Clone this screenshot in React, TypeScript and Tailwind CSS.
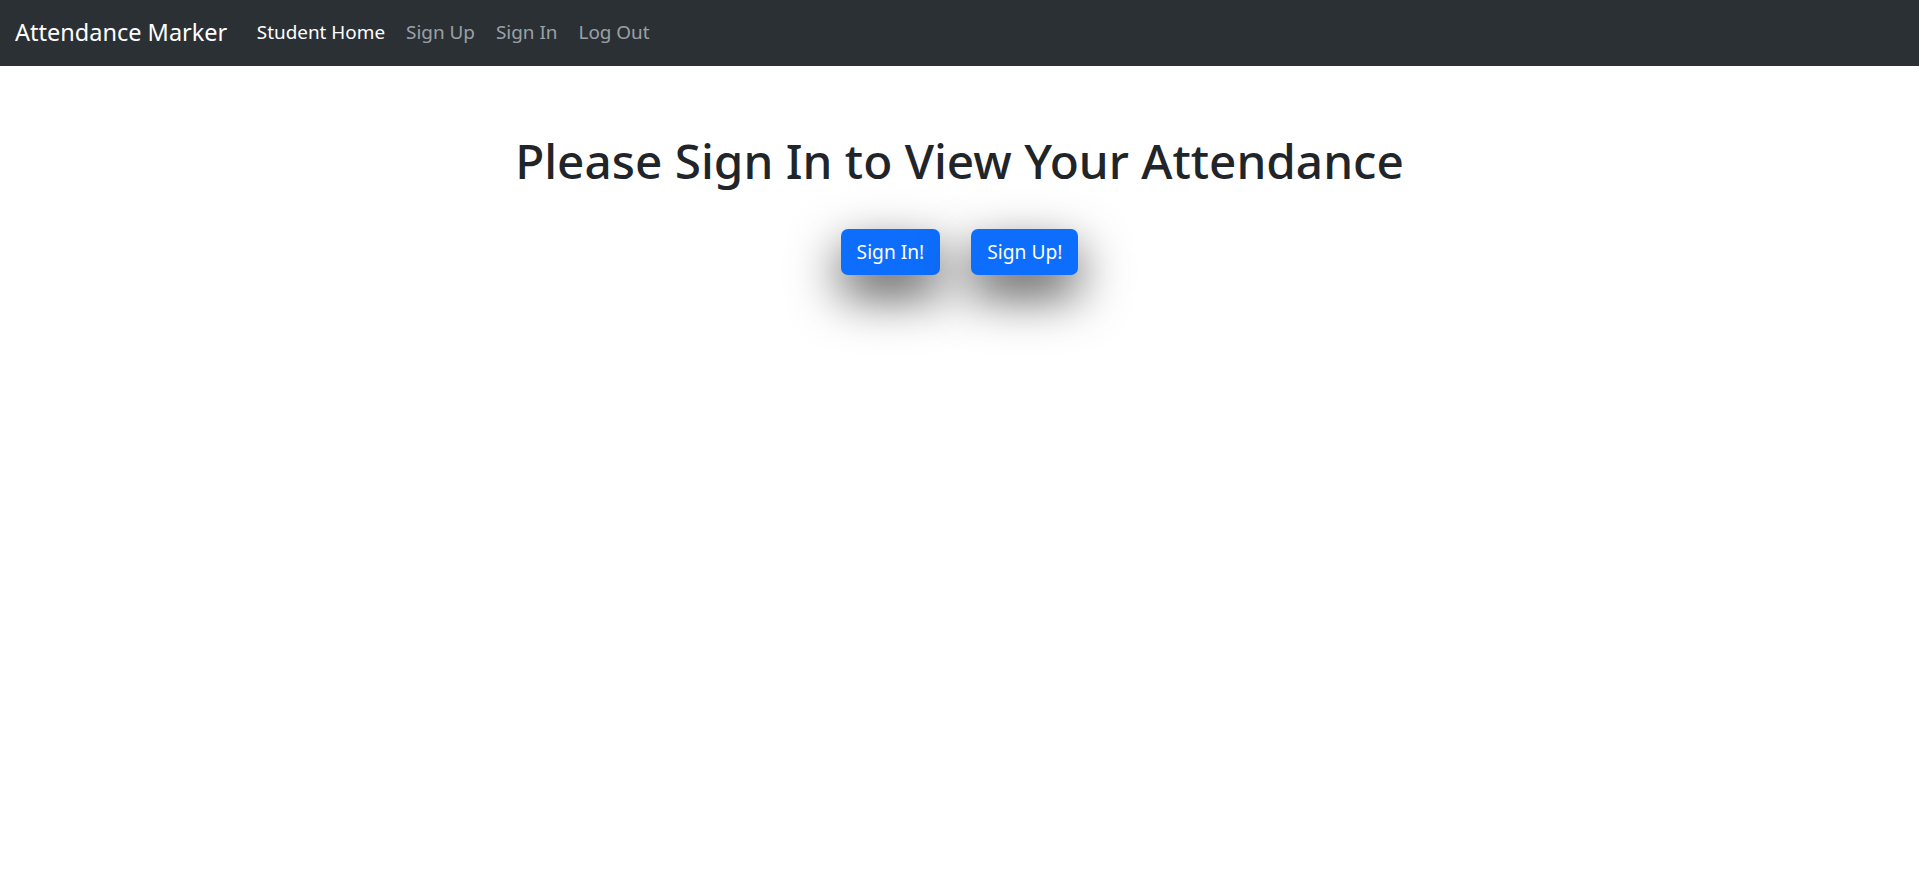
const links = [
  { label: 'Student Home', active: true },
  { label: 'Sign Up', active: false },
  { label: 'Sign In', active: false },
  { label: 'Log Out', active: false },
];

const App = () => {
  return (
    <div className="min-h-screen bg-white font-['Noto_Sans',sans-serif]">
      {/* Navbar */}
      <nav className="h-[66px] bg-[#2b3035] flex items-center px-[15px] pb-[2px]">
        <span className="text-[23.5px] text-white mr-[19px] leading-[36px]">Attendance Marker</span>
        <div className="flex items-center">
          {links.map((link) => (
            <a
              key={link.label}
              href="#"
              className={`px-[10.5px] text-[18.9px] leading-[29px] ${
                link.active ? 'text-white' : 'text-[#dee2e6a6]'
              }`}
            >
              {link.label}
            </a>
          ))}
        </div>
      </nav>

      {/* Content */}
      <div className="flex flex-col items-center pt-[66px]">
        <h1 className="text-[47.7px] leading-[58px] font-medium text-[#212529]">
          Please Sign In to View Your Attendance
        </h1>
        <div className="flex gap-[31px] mt-[39px]">
          <button className="h-[46px] px-[16px] rounded-[7px] bg-[#0d6efd] text-white text-[19.2px] shadow-[0_20px_50px_rgba(0,0,0,0.7)]">
            Sign In!
          </button>
          <button className="h-[46px] px-[16px] rounded-[7px] bg-[#0d6efd] text-white text-[19.2px] shadow-[0_20px_50px_rgba(0,0,0,0.7)]">
            Sign Up!
          </button>
        </div>
      </div>
    </div>
  );
};

export default App;
